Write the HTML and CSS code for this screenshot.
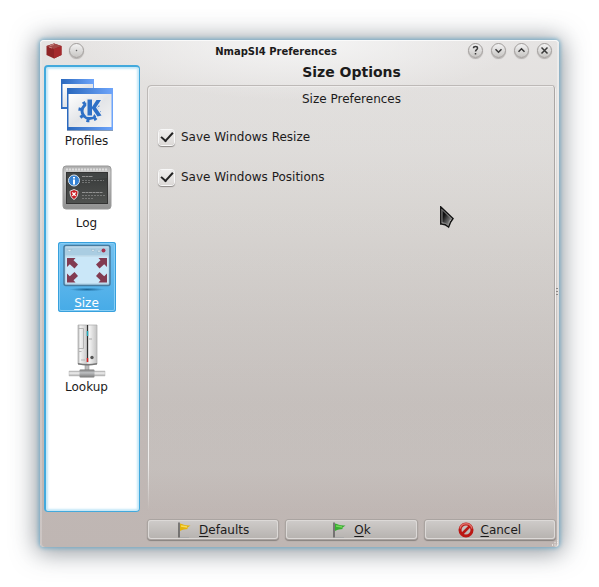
FILE: index.html
```html
<!DOCTYPE html>
<html lang="en">
<head>
<meta charset="utf-8">
<title>NmapSI4 Preferences</title>
<link rel="stylesheet" href="styles.css">
</head>
<body>
<main class="window">
  <header class="titlebar">
    <svg class="app-icon" viewBox="0 0 16 16" aria-hidden="true">
      <path d="M8 .5 15.500 3v9L8 15.500.5 12V3z" fill="#8f2426"/>
      <path d="M8 .5 15.500 3 8 6 .5 3z" fill="#a34a48"/>
      <path d="M8 6l7.500-3v9L8 15.500z" fill="#a52a2d"/>
      <path d="M3 4l3 1M4 2.500l4-1" stroke="#c98886"/>
    </svg>
    <button class="round" type="button" aria-label="Window menu"><svg viewBox="0 0 15 15"><circle cx="7.500" cy="7.500" r=".4" fill="#555" stroke-width=".6"/></svg></button>
    <h1 class="title">NmapSI4 Preferences</h1>
    <div class="controls">
      <button class="round" type="button" aria-label="Help"><svg viewBox="0 0 15 15"><path d="M5.500 5.200c0-2.200 4-2.200 4 0 0 1.500-2 1.500-2 3.300M7.500 10v1.500"/></svg></button>
      <button class="round" type="button" aria-label="Minimize"><svg viewBox="0 0 15 15"><path d="M4.500 6.200l3 3 3-3"/></svg></button>
      <button class="round" type="button" aria-label="Maximize"><svg viewBox="0 0 15 15"><path d="M4.500 8.800l3-3 3 3"/></svg></button>
      <button class="round" type="button" aria-label="Close"><svg viewBox="0 0 15 15"><path d="M4.500 4.500l6 6M10.500 4.500l-6 6"/></svg></button>
    </div>
  </header>

  <div class="body">
    <nav class="sidebar" aria-label="Sections">
      <button class="item" type="button">
        <svg width="54" height="54" viewBox="0 0 54 54" aria-hidden="true">
          <defs>
            <linearGradient id="blue"><stop stop-color="#2a68bd"/><stop offset="1" stop-color="#6ea5fb"/></linearGradient>
            <linearGradient id="pane" x2="1" y2="1"><stop stop-color="#fff"/><stop offset=".5" stop-color="#e3e5e8"/><stop offset="1" stop-color="#f5f5f5"/></linearGradient>
          </defs>
          <path d="M1 1h33v30H1z" fill="url(#blue)"/><path d="M2.500 6H33v23H2.500z" fill="url(#pane)"/>
          <path d="M7 10h46v42H7z" fill="url(#blue)"/><path d="M8.500 16h43v33h-43z" fill="url(#pane)"/>
          <path d="M7 52.500h46" stroke="#879dbb"/>
          <circle cx="29.500" cy="33" r="7.500" fill="none" stroke="#2e70c6" stroke-width="3"/>
          <circle cx="29.500" cy="33" r="9.700" fill="none" stroke="#2e70c6" stroke-width="3" stroke-dasharray="3 4.620"/>
          <path d="M27.500 21.500H32v7.500l4.500-7H41l-5 7.500 5.500 8-4 1-5.500-8v7h-4.500z" fill="#2e70c6" stroke="#e9ebee" stroke-width="2.400" paint-order="stroke"/>
        </svg>
        <span>Profiles</span>
      </button>
      <button class="item" type="button">
        <svg width="50" height="52" viewBox="0 0 50 52" aria-hidden="true">
          <defs>
            <linearGradient id="frame" x2="0" y2="1"><stop stop-color="#aaa"/><stop offset=".15" stop-color="#ccc"/><stop offset="1" stop-color="#909090"/></linearGradient>
            <linearGradient id="screen" x2="0" y2="1"><stop stop-color="#353838"/><stop offset=".4" stop-color="#414342"/><stop offset="1" stop-color="#505250"/></linearGradient>
          </defs>
          <rect x="1" y="4" width="48" height="43" rx="3" fill="url(#frame)" stroke="#999"/>
          <path d="M4 7.500h42" stroke="#ddd" stroke-width="2" stroke-dasharray="2 1"/>
          <rect x="4.500" y="10.500" width="41" height="31" fill="url(#screen)" stroke="#333"/>
          <path d="M5 20l40-4v-5H5z" fill="#4c4f4f" opacity=".5"/>
          <circle cx="12" cy="18.500" r="5.500" fill="#3681d2" stroke="#d8e2ec"/>
          <path d="M12 15v1.500M12 17.500v5" stroke="#fff" stroke-width="2"/>
          <path d="M12 27.500l4 1.700c0 4-1 6.500-4 8.300-3-1.800-4-4.300-4-8.300z" fill="#cb1d23" stroke="#ddd"/>
          <path d="M10.300 30.500l3.400 3.400m0-3.400l-3.400 3.400" stroke="#fff" stroke-width="1.300"/>
          <g stroke="#aaa" opacity=".75"><path d="M20 14.500h11M20 30.500h21" stroke-dasharray="3 .5"/><path d="M20 18.500h22M20 20.500h9M20 33.500h23M20 36.500h12" stroke-dasharray="2 1" opacity=".65"/></g>
        </svg>
        <span>Log</span>
      </button>
      <button class="item selected" type="button" aria-current="page">
        <svg width="50" height="50" viewBox="0 0 50 50" aria-hidden="true">
          <defs><radialGradient id="shade"><stop stop-color="#1b6596"/><stop offset="1" stop-color="#1b6596" stop-opacity="0"/></radialGradient></defs>
          <ellipse cx="25" cy="45.500" rx="18" ry="1.800" fill="url(#shade)"/>
          <rect x="2" y="1.500" width="46" height="40" rx="2" fill="#aacde2" stroke="#477b9e" stroke-width="1.500"/>
          <path d="M3.500 12.500h43v27h-43z" fill="#cae7f8"/>
          <path d="M3.500 3h43M3.500 12h43" stroke="#cbe1ee"/>
          <path d="M5 5.500h5L7.500 8zM29 5.500h4L31 8zM35 8h4l-2-2.500z" fill="#dceaf2" stroke="#8eb0c4" stroke-width=".5"/>
          <circle cx="41.500" cy="6.500" r="2" fill="#a6334e"/>
          <g fill="#823b51">
            <path d="M5 14h8.500l-2 2.300 4.500 4.200-3.500 4-4.700-4.300L5 23z"/>
            <path d="M45 14h-8.500l2 2.300-4.500 4.200 3.500 4 4.700-4.300L45 23z"/>
            <path d="M5 38.500h8.500l-2-2.300 4.500-4.200-3.500-4-4.700 4.300L5 29.500z"/>
            <path d="M45 38.500h-8.500l2-2.300-4.500-4.200 3.500-4 4.700 4.300 2.800-2.800z"/>
          </g>
        </svg>
        <span>Size</span>
      </button>
      <button class="item" type="button">
        <svg width="40" height="54" viewBox="0 0 40 54" aria-hidden="true">
          <defs>
            <linearGradient id="tower"><stop stop-color="#b5b5b5"/><stop offset=".12" stop-color="#f2f2f2"/><stop offset=".45" stop-color="#ccc"/><stop offset=".6" stop-color="#f2f2f2"/><stop offset="1" stop-color="#c2c2c2"/></linearGradient>
            <linearGradient id="pipe" x2="0" y2="1"><stop stop-color="#aaa"/><stop offset=".4" stop-color="#f1f1f1"/><stop offset="1" stop-color="#aaa"/></linearGradient>
            <linearGradient id="joint" x2="0" y2="1"><stop stop-color="#777"/><stop offset=".4" stop-color="#bec0c2"/><stop offset="1" stop-color="#777"/></linearGradient>
          </defs>
          <path d="M18 39h4v8h-4z" fill="#bbb" stroke="#888" stroke-width=".5"/>
          <path d="M2 47h36v5H2z" fill="url(#pipe)" stroke="#bbb" stroke-width=".5"/>
          <rect x="12.500" y="45.500" width="15" height="8" rx="1" fill="url(#joint)"/>
          <path d="M11 1h19v39q-9.500 2-19 0z" fill="url(#tower)" stroke="#aaa" stroke-width=".7"/>
          <path d="M11 39q9.500 2 19 0v1.500q-9.500 2-19 0z" fill="#777"/>
          <path d="M11.500 4.500h5v20h-5M12 27.500h2.500M14 36h4" fill="none" stroke="#aaa" stroke-width=".8"/>
          <path d="M20.500 1v37" stroke="#303030" stroke-width="1.200"/>
          <path d="M20.500 7v5" stroke="#23a9bb" stroke-width="1.500"/><path d="M20.500 34v4" stroke="#d22" stroke-width="1.500"/>
          <path d="M22 15h3" stroke="#aaa"/><circle cx="25" cy="33.500" r="1.700" fill="#555"/>
        </svg>
        <span>Lookup</span>
      </button>
    </nav>

    <div class="content">
      <h2 class="heading">Size Options</h2>
      <fieldset class="group">
        <legend class="group-title">Size Preferences</legend>
        <label class="check"><input type="checkbox" checked> Save Windows Resize</label>
        <label class="check"><input type="checkbox" checked> Save Windows Positions</label>
      </fieldset>
      <footer class="actions">
        <button class="action" type="button">
          <svg viewBox="0 0 16 16" aria-hidden="true"><path d="M3 15.500h9" stroke="#aaa"/><path d="M3 1.500c3 .5 5 2.500 10.500 2L10 6l1 1c-3 .5-5 0-8 2z" fill="#e3b20c"/><path d="M4 4c2.500 0 4 1 6 1" stroke="#f8dc57" stroke-width="1.500" fill="none"/><path d="M2 .5v15" stroke="#444" stroke-width="1.200"/></svg>
          <span><u>D</u>efaults</span>
        </button>
        <button class="action" type="button">
          <svg viewBox="0 0 16 16" aria-hidden="true"><path d="M3 15.500h9" stroke="#aaa"/><path d="M3 1.500c3 .5 5 2.500 10.500 2L10 6l1 1c-3 .5-5 0-8 2z" fill="#38ad32"/><path d="M4 4c2.500 0 4 1 6 1" stroke="#74d858" stroke-width="1.500" fill="none"/><path d="M2 .5v15" stroke="#444" stroke-width="1.200"/></svg>
          <span><u>O</u>k</span>
        </button>
        <button class="action" type="button">
          <svg viewBox="0 0 16 16" aria-hidden="true"><circle cx="8" cy="8" r="6" fill="none" stroke="#bb1714" stroke-width="3"/><path d="M4 12l8-8" stroke="#bb1714" stroke-width="2.500"/><path d="M2 6.500a6.200 6.200 0 0 1 12 0" fill="none" stroke="#dc6e68" stroke-width="1.500"/></svg>
          <span><u>C</u>ancel</span>
        </button>
      </footer>
    </div>
  </div>

  <span class="splitter" aria-hidden="true"></span>
  <svg class="grip" viewBox="0 0 6 6" aria-hidden="true"><path d="M0 5h1M2.500 5h1M5 5h1M2.500 2.500h1M5 2.500h1M5 0h1" stroke="#f1eeec" stroke-width="1.300"/></svg>
  <svg class="pointer" viewBox="0 0 16 24" aria-hidden="true">
    <defs><linearGradient id="ptr" x2="1" y2="1"><stop offset=".3" stop-color="#111"/><stop offset="1" stop-color="#aaa"/></linearGradient></defs>
    <path d="M2 3.500v13q3 .5 6 2.500l1.500-4.500 1.800-2z" fill="url(#ptr)" stroke="#888"/>
    <path d="M.8 1v17q4-.5 7.800 3l2-5 2.400-3.500z" fill="none" stroke="#111" stroke-width="1.500"/>
  </svg>
</main>
</body>
</html>
```
FILE: styles.css
```css
* {
  box-sizing: border-box;
}

body {
  margin: 0;
  min-height: 100vh;
  padding: 40px;
  display: flex;
  background: #fff;
  color: #1c1b1b;
  font: 12px/16px "DejaVu Sans", sans-serif;
}

button {
  font: inherit;
  color: inherit;
  padding: 0;
  border: 0;
  background: none;
}

.window {
  position: relative;
  flex: 1;
  display: flex;
  flex-direction: column;
  border-radius: 4px;
  background:
    radial-gradient(ellipse 220px 60px at 50% 0, #f5f5f5, rgba(245, 245, 245, 0)),
    linear-gradient(#e6e4e3, #dfdcda 22%, #d8d4d1 34%, #cac4c1 55%, #c1b9b6 72%, #bfb6b3);
  box-shadow:
    inset 0 1px #fafafa,
    inset -2px 0 rgba(245, 245, 245, .5),
    inset 2px 0 rgba(245, 245, 245, .25),
    0 0 4px 1px #72abc8,
    0 2px 24px 4px rgba(60, 70, 80, .55);
}

.titlebar {
  display: flex;
  align-items: center;
  gap: 7px;
  height: 21px;
  padding: 0 7px 0 6px;
}

.app-icon {
  width: 16px;
  height: 16px;
}

.title {
  flex: 1;
  margin: 0;
  padding-top: 2px;
  font-size: 10px;
  line-height: 16px;
  text-align: center;
}

.controls {
  display: flex;
  gap: 8px;
}

.round {
  width: 15px;
  height: 15px;
  border: 1px solid #a19d9b;
  border-radius: 50%;
  background: linear-gradient(#f2f2f2, #c8c6c4);
  box-shadow: 0 1px 1px #b0adab;
}

.round svg {
  display: block;
  width: 15px;
  height: 15px;
  margin: -1px;
  fill: none;
  stroke: #3a3a3a;
  stroke-width: 1.500;
}

.body {
  flex: 1;
  display: flex;
  gap: 7px;
  padding: 4px 3px 0 4px;
}

.sidebar {
  width: 96px;
  margin-bottom: 35px;
  padding: 9px 12px 9px 0;
  display: flex;
  flex-direction: column;
  align-items: center;
  gap: 10px;
  background: #fff;
  border: 1px solid #43a9dc;
  border-width: 2px 1px 1px 2px;
  border-radius: 4px;
  box-shadow: inset 0 0 2px 2px #c5e8f8;
}

.item {
  width: 58px;
  padding: 2px;
  display: flex;
  flex-direction: column;
  align-items: center;
  border-radius: 3px;
}

.item span {
  margin: 1px 0 -1px;
}

.selected {
  background: linear-gradient(#74c1f0, #46abe7);
  box-shadow: inset 0 0 0 1px #38a0dc, inset 0 0 0 2px #86cdf5;
  color: #fff;
  text-decoration: underline;
  text-underline-offset: 2px;
}

.content {
  flex: 1;
  display: flex;
  flex-direction: column;
}

.heading {
  margin: -1px 0 5px;
  font-size: 14px;
  line-height: 16px;
  text-align: center;
}

.group {
  position: relative;
  flex: 1;
  min-width: 0;
  margin: 0;
  padding: 0 11px;
  border: 0;
  border-radius: 4px 4px 0 0;
  background: linear-gradient(rgba(220, 220, 218, .15), rgba(215, 218, 215, .2) 90%, rgba(215, 218, 215, 0));
}

.group::before {
  content: "";
  position: absolute;
  inset: 0;
  border-radius: 4px 4px 0 0;
  box-shadow: inset 1px 1px #bdb9b7, inset -1px 0 #f1efee, inset -2px 0 #aaa6a4, inset 2px 2px #efedec;
  -webkit-mask-image: linear-gradient(#000 88%, transparent);
  mask-image: linear-gradient(#000 88%, transparent);
  pointer-events: none;
}

.group-title {
  float: left;
  width: 100%;
  padding: 6px 0 21px;
  text-align: center;
}

.check {
  clear: both;
  display: flex;
  align-items: center;
  gap: 6px;
  height: 18px;
  margin-bottom: 22px;
}

.check input {
  appearance: none;
  width: 15px;
  height: 15px;
  margin: 0 1px;
  border-radius: 3px;
  background: linear-gradient(#eeedec, #dcd9d7);
  box-shadow: 0 0 0 1px #f8f8f8, 0 1px 1px 1px #8d8987;
  display: grid;
  place-items: center;
}

.check input:checked::before {
  content: "";
  width: 10px;
  height: 5px;
  margin-bottom: 3px;
  border: solid #222;
  border-width: 0 0 2px 2px;
  transform: rotate(-48deg);
}

.actions {
  display: flex;
  gap: 8px;
  padding: 9px 1px 8px;
}

.action {
  flex: 1;
  height: 19px;
  display: flex;
  align-items: center;
  justify-content: center;
  gap: 6px;
  border-radius: 3px;
  background: linear-gradient(#cfccca, #b6b2af);
  box-shadow: inset 0 0 0 1px #dcd9d7, 0 0 0 1px #aaa4a1, 0 1px 1px 1px #88827f;
}

.action svg {
  width: 16px;
  height: 16px;
}

.action span {
  padding-top: 1px;
}

.action u {
  text-underline-offset: 2px;
}

.splitter {
  position: absolute;
  right: 1px;
  top: 49%;
  width: 2px;
  height: 8px;
  background: repeating-linear-gradient(#8d8987 0 1px, transparent 1px 3px);
}

.grip {
  position: absolute;
  right: 1px;
  bottom: 1px;
  width: 6px;
  height: 6px;
}

.pointer {
  position: absolute;
  left: 400px;
  top: 166px;
  width: 16px;
  height: 24px;
}
```
